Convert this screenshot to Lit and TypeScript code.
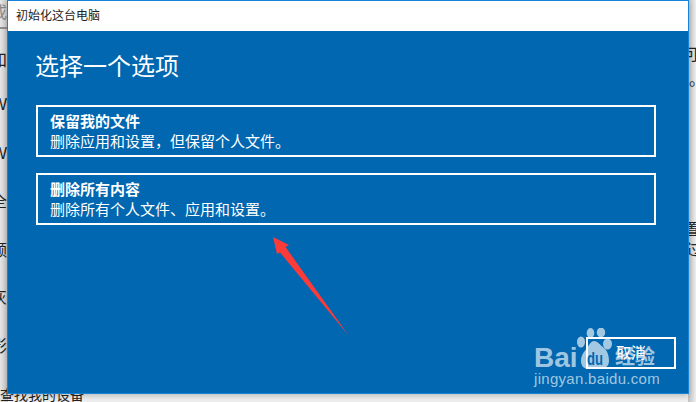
import { LitElement, html, css } from "lit";
import { customElement } from "lit/decorators.js";

// bits of the page behind the dialog that stick out on either side
const leftScraps = [
  { t: "和", y: 52 },
  { t: "W", y: 96 },
  { t: "W", y: 145 },
  { t: "全", y: 193 },
  { t: "额", y: 242 },
  { t: "灰", y: 289 },
  { t: "影", y: 338 },
];
const rightScraps = [
  { t: "可", x: 683, y: 46 },
  { t: "。", x: 689, y: 71 },
  { t: "置", x: 684, y: 221 },
  { t: "过", x: 686, y: 241 },
];

@customElement("app-root")
export class AppRoot extends LitElement {
  static styles = css`
    :host {
      display: block;
      position: relative;
      width: 696px;
      height: 402px;
      overflow: hidden;
      background: #f0f0f0;
      font-family: "Liberation Sans", "Noto Sans CJK SC", sans-serif;
    }
    .shade {
      position: absolute;
      top: 0;
      bottom: 0;
      left: 0;
      width: 8px;
      background: linear-gradient(to right, #e6e6e6, #c6c6c6);
    }
    .shade.right {
      left: auto;
      right: 0;
      background: linear-gradient(to right, #c2c2c2, #eeeeee);
    }
    .rule {
      position: absolute;
      left: 0;
      top: 27px;
      width: 8px;
      height: 2px;
      background: #8f8f8f;
    }
    .scrap {
      position: absolute;
      font-size: 16px;
      line-height: 18px;
      color: #222;
      white-space: nowrap;
    }
    .scrap.left {
      right: 689px;
    }
    .scrap.top {
      top: 4px;
      color: #8a8a8a;
    }
    .behind {
      position: absolute;
      left: 0;
      top: 386px;
      font-size: 14px;
      line-height: 18px;
      color: #222;
      white-space: nowrap;
    }
    .dialog {
      position: absolute;
      left: 7px;
      top: 0;
      width: 682px;
      height: 394px;
      box-sizing: border-box;
      border: 1px solid #1783d8;
      display: flex;
      flex-direction: column;
      background: #0067b0;
      box-shadow: 0 2px 6px rgba(0, 0, 0, 0.22);
    }
    .title {
      height: 30px;
      flex: none;
      background: #fff;
      color: #222;
      font-size: 12px;
      line-height: 30px;
      padding-left: 8px;
    }
    .body {
      flex: 1;
      position: relative;
      padding: 21px 28px 0;
      color: #fff;
    }
    h1 {
      margin: 0 0 23px -1px;
      font-size: 24px;
      line-height: 30px;
      font-weight: 400;
    }
    .options {
      display: flex;
      flex-direction: column;
      gap: 16px;
    }
    .option {
      box-sizing: border-box;
      width: 620px;
      height: 52px;
      border: 2px solid #fff;
      padding: 5px 12px;
      font-size: 15px;
      line-height: 20px;
    }
    .option b {
      display: block;
      font-weight: 700;
    }
    .cancel {
      position: absolute;
      right: 12px;
      bottom: 24px;
      box-sizing: border-box;
      width: 90px;
      height: 32px;
      border: 2px solid #fff;
      font-size: 15px;
      line-height: 28px;
      text-align: center;
      color: #fff;
    }
    .arrow {
      position: absolute;
      left: 270px;
      top: 234px;
    }
    .mark {
      position: absolute;
      left: 534px;
      top: 326px;
      width: 158px;
      height: 62px;
      color: rgba(255, 255, 255, 0.64);
    }
    .bai {
      position: absolute;
      left: 0;
      top: 16px;
      font-size: 28px;
      line-height: 32px;
      font-weight: 700;
    }
    .paw {
      position: absolute;
      left: 42px;
      top: 2px;
    }
    .paw text {
      font-size: 18px;
      font-weight: 700;
      fill: #0067b0;
    }
    .jy {
      position: absolute;
      left: 81px;
      top: 19px;
      font-size: 20px;
      line-height: 24px;
      font-weight: 700;
    }
    .url {
      position: absolute;
      left: 0;
      top: 44px;
      font-size: 15px;
      line-height: 18px;
      letter-spacing: 0.3px;
      white-space: nowrap;
    }
  `;

  render() {
    return html`
      <div class="shade"></div>
      <div class="shade right"></div>
      <div class="rule"></div>
      <div class="scrap left top">或</div>
      ${leftScraps.map(
        (s) => html`<div class="scrap left" style="top:${s.y}px">${s.t}</div>`,
      )}
      ${rightScraps.map(
        (s) =>
          html`<div class="scrap" style="left:${s.x}px;top:${s.y}px">
            ${s.t}
          </div>`,
      )}
      <div class="behind">查找我的设备</div>
      <div class="dialog">
        <div class="title">初始化这台电脑</div>
        <div class="body">
          <h1>选择一个选项</h1>
          <div class="options">
            <div class="option">
              <b>保留我的文件</b>
              删除应用和设置，但保留个人文件。
            </div>
            <div class="option">
              <b>删除所有内容</b>
              删除所有个人文件、应用和设置。
            </div>
          </div>
          <div class="cancel">取消</div>
        </div>
      </div>
      <svg class="arrow" width="84" height="106" viewBox="0 0 84 106">
        <path d="M3 3 L19 11 L15.5 13 L79 102 L10 18.5 L7 20 Z" fill="#fb3a3a" />
      </svg>
      <div class="mark">
        <span class="bai">Bai</span>
        <svg class="paw" width="36" height="42" viewBox="0 0 36 42" fill="currentColor">
          <ellipse cx="5" cy="14" rx="4" ry="5.5" />
          <ellipse cx="14.5" cy="5" rx="3.8" ry="5" />
          <ellipse cx="25" cy="4.5" rx="4.2" ry="5" />
          <ellipse cx="31.5" cy="16" rx="4.5" ry="5.5" />
          <path d="M18 13 C22 13 24 17 28 20 C32 23 33 29 33 33 C33 39 28 41 23 41 L13 41 C8 41 5 38 5 33 C5 27 8 24 11 20 C13 17 15 13 18 13 Z" />
          <text x="19" y="37" text-anchor="middle" textLength="16" lengthAdjust="spacingAndGlyphs">du</text>
        </svg>
        <span class="jy">经验</span>
        <span class="url">jingyan.baidu.com</span>
      </div>
    `;
  }
}
